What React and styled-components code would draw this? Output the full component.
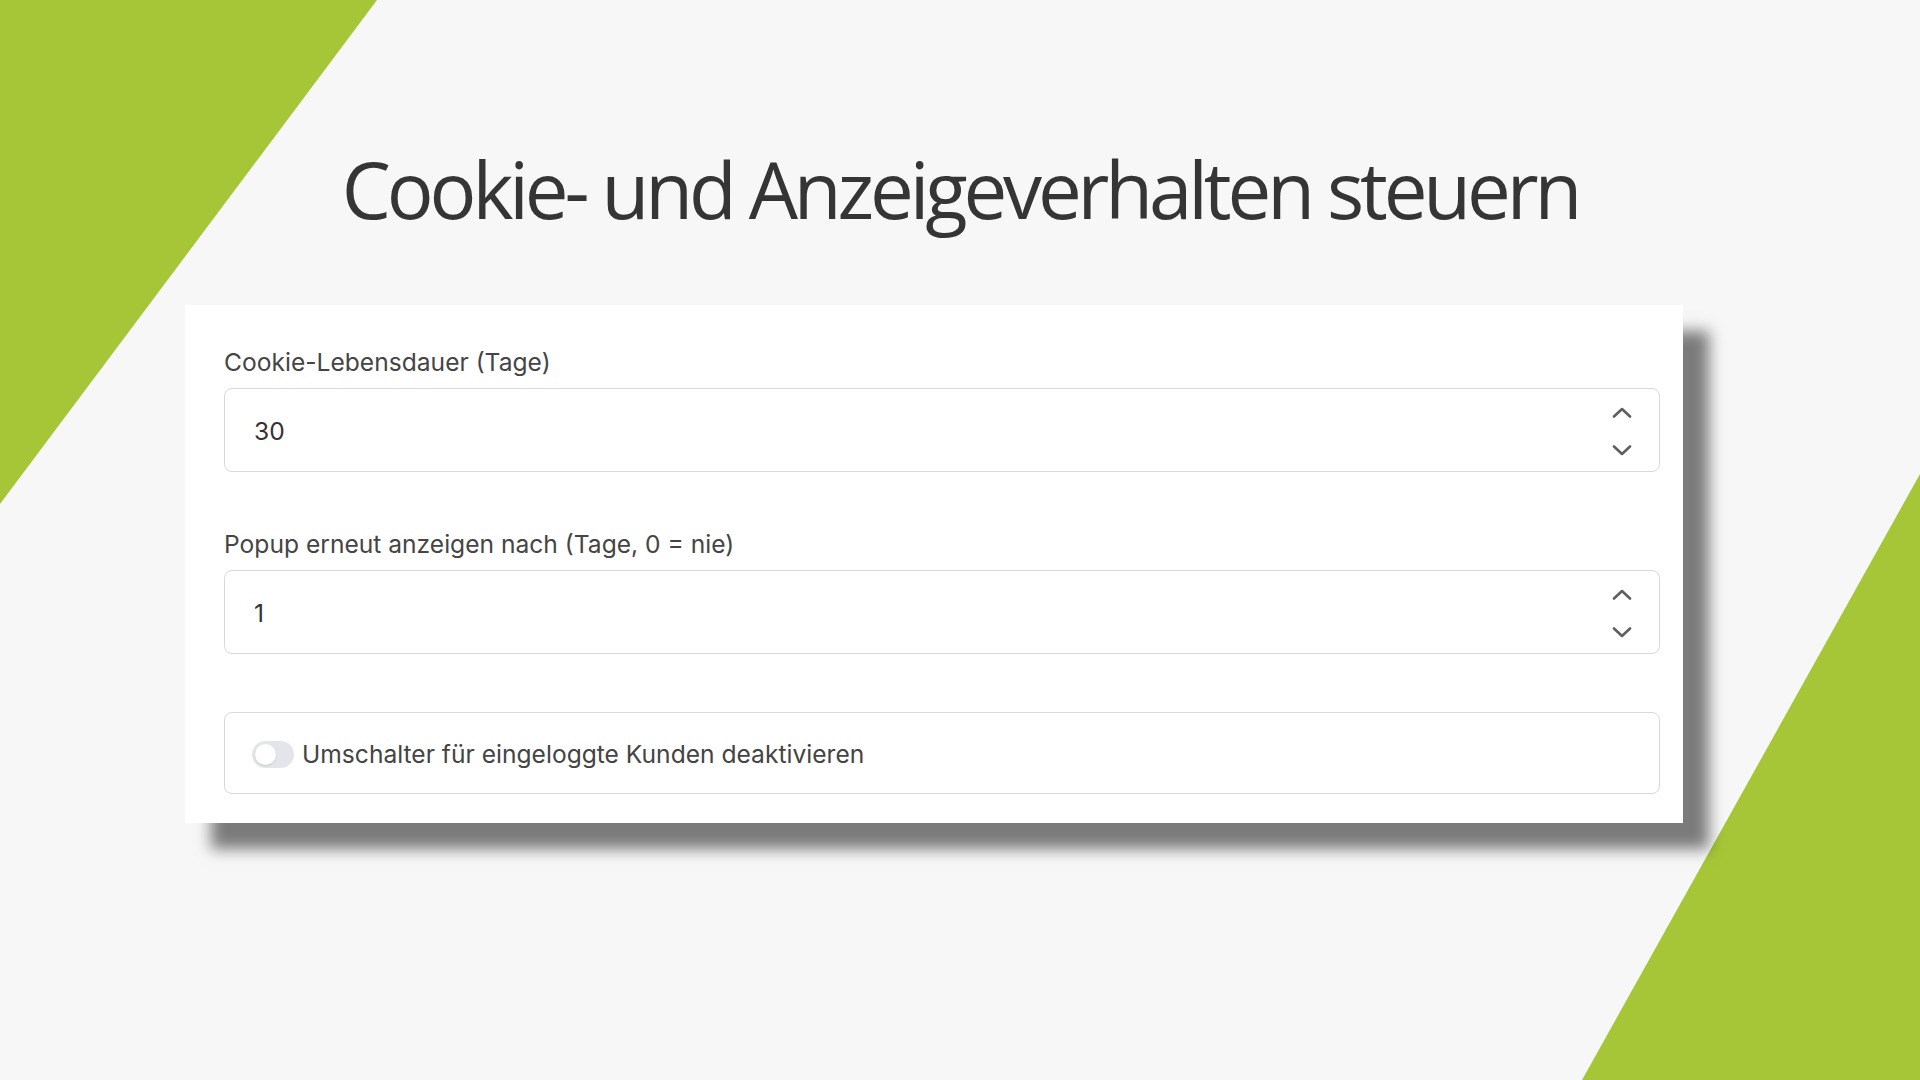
import React from "react";
import styled, { createGlobalStyle } from "styled-components";

const GlobalStyle = createGlobalStyle`
  html, body { margin: 0; padding: 0; }
  body { background: #f7f7f7; }
  * { box-sizing: border-box; }
`;

const Page = styled.div`
  position: relative;
  width: 1920px;
  height: 1080px;
  overflow: hidden;
  background: #f7f7f7;
  display: flex;
  flex-direction: column;
`;

const Backdrop = styled.svg`
  position: absolute;
  inset: 0;
  width: 1920px;
  height: 1080px;
  z-index: 0;
`;

const Title = styled.h1`
  position: relative;
  z-index: 1;
  margin: 136px 0 0;
  text-align: center;
  font-family: "Open Sans", "Noto Sans", sans-serif;
  font-weight: 400;
  font-size: 78px;
  line-height: 106px;
  letter-spacing: -0.053em;
  color: #353535;
`;

const Card = styled.section`
  position: relative;
  z-index: 1;
  margin: 63px 0 0 185px;
  width: 1498px;
  padding: 39px 23px 29px 39px;
  background: #ffffff;
  box-shadow: 26px 26px 14px rgba(0, 0, 0, 0.5);
  display: flex;
  flex-direction: column;
  font-family: "Inter", "Liberation Sans", sans-serif;
`;

const Field = styled.div`
  display: flex;
  flex-direction: column;
  gap: 8px;
  margin-top: ${(p) => (p.$first ? "0" : "54px")};
`;

const Label = styled.div`
  font-size: 24.6px;
  line-height: 36px;
  color: #454545;
`;

const NumberBox = styled.div`
  height: 84px;
  border: 1px solid #d9d9d9;
  border-radius: 8px;
  display: flex;
  align-items: center;
  padding: 2px 27px 0 29px;
`;

const Value = styled.div`
  flex: 1;
  font-size: 24.6px;
  color: #333333;
`;

const Spinner = styled.div`
  display: flex;
  flex-direction: column;
  gap: 27px;
`;

const Chevron = styled.svg`
  display: block;
  width: 20px;
  height: 11px;
`;

const ToggleBox = styled.div`
  margin-top: 58px;
  height: 82px;
  border: 1px solid #d9d9d9;
  border-radius: 8px;
  display: flex;
  align-items: center;
  gap: 8px;
  padding: 2px 27px 0;
`;

const Switch = styled.div`
  width: 42px;
  height: 27px;
  border-radius: 14px;
  background: #e3e5ea;
  display: flex;
  align-items: center;
  padding: 0 3px;
  flex-shrink: 0;
`;

const Knob = styled.div`
  width: 21px;
  height: 21px;
  border-radius: 50%;
  background: #ffffff;
  box-shadow: 0 1px 2px rgba(0, 0, 0, 0.12);
`;

const ToggleText = styled.span`
  font-size: 24.6px;
  color: #444444;
`;

const Up = () => (
  <Chevron viewBox="0 0 20 11">
    <polyline points="2,9.5 10,2 18,9.5" fill="none" stroke="#5f5f5f" strokeWidth="2.6" strokeLinecap="round" strokeLinejoin="round" />
  </Chevron>
);
const Down = () => (
  <Chevron viewBox="0 0 20 11">
    <polyline points="2,1.5 10,9 18,1.5" fill="none" stroke="#5f5f5f" strokeWidth="2.6" strokeLinecap="round" strokeLinejoin="round" />
  </Chevron>
);

const NumberField = ({ label, value, first }) => (
  <Field $first={first}>
    <Label>{label}</Label>
    <NumberBox>
      <Value>{value}</Value>
      <Spinner>
        <Up />
        <Down />
      </Spinner>
    </NumberBox>
  </Field>
);

export default function App() {
  return (
    <>
      <GlobalStyle />
      <Page>
        <Backdrop viewBox="0 0 1920 1080">
          <polygon points="0,0 377,0 0,504" fill="#a7c637" />
          <polygon points="1920,474 1920,1080 1582,1080" fill="#a7c637" />
        </Backdrop>
        <Title>Cookie- und Anzeigeverhalten steuern</Title>
        <Card>
          <NumberField first label="Cookie-Lebensdauer (Tage)" value="30" />
          <NumberField label="Popup erneut anzeigen nach (Tage, 0 = nie)" value="1" />
          <ToggleBox>
            <Switch>
              <Knob />
            </Switch>
            <ToggleText>Umschalter für eingeloggte Kunden deaktivieren</ToggleText>
          </ToggleBox>
        </Card>
      </Page>
    </>
  );
}
